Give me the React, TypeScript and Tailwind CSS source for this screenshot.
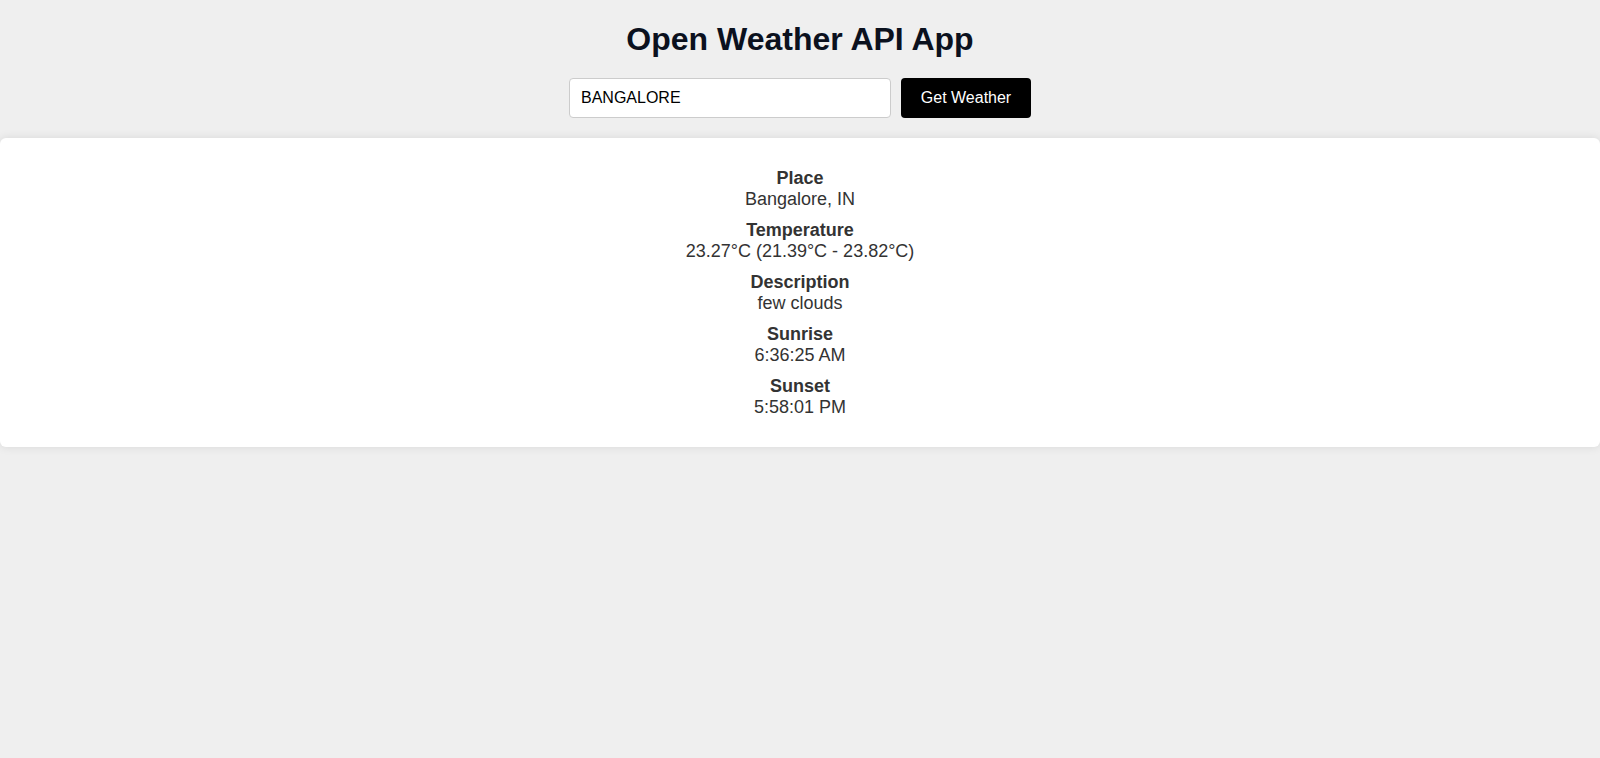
import React from "react";

const items = [
  { label: "Place", value: "Bangalore, IN" },
  { label: "Temperature", value: "23.27°C (21.39°C - 23.82°C)" },
  { label: "Description", value: "few clouds" },
  { label: "Sunrise", value: "6:36:25 AM" },
  { label: "Sunset", value: "5:58:01 PM" },
];

export default function App() {
  return (
    <div className="min-h-[758px] bg-[#efefef] font-['Liberation_Sans',Arial,sans-serif] flex flex-col">
      <h1 className="text-center text-[32px] font-bold leading-[37px] mt-[21px] mb-[20px] text-[#0b111e]">
        Open Weather API App
      </h1>
      <div className="flex justify-center gap-[10px]">
        <input
          defaultValue="BANGALORE"
          className="w-[322px] h-[40px] bg-white border border-[#cccccc] rounded-[4px] px-[11px] text-[16px] text-black outline-none"
        />
        <button className="w-[130px] h-[40px] bg-black text-white text-[16px] rounded-[4px]">
          Get Weather
        </button>
      </div>
      <div className="mt-[20px] bg-white rounded-[6px] shadow-[0_0_10px_rgba(0,0,0,0.1)] pt-[30px] pb-[29px] flex flex-col items-center gap-[10px] text-[#333333] text-[18px] leading-[21px]">
        {items.map((it) => (
          <div key={it.label} className="text-center">
            <div className="font-bold">{it.label}</div>
            <div>{it.value}</div>
          </div>
        ))}
      </div>
    </div>
  );
}
